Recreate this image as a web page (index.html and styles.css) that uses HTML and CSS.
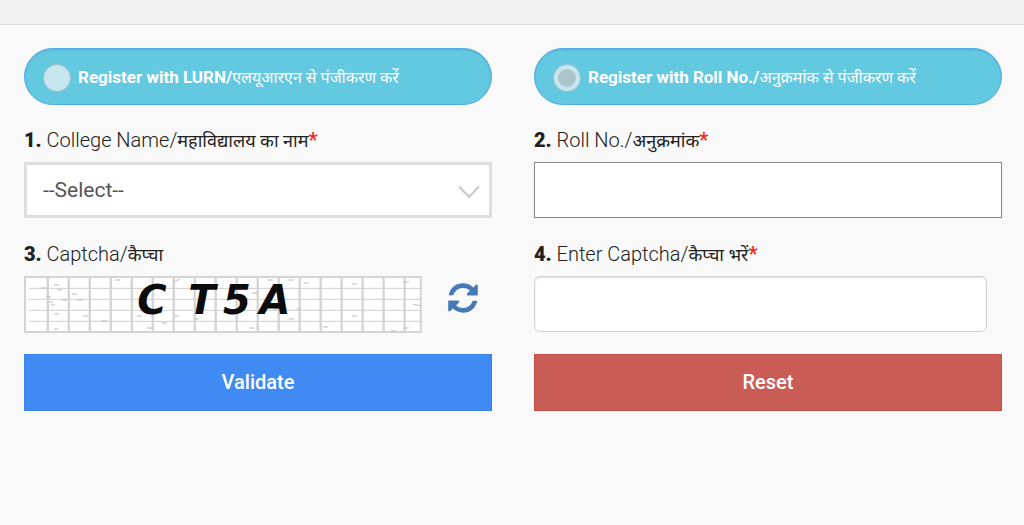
FILE: index.html
```html
<!DOCTYPE html>
<html lang="en">
<head>
    <meta charset="UTF-8">
    <meta name="viewport" content="width=device-width, initial-scale=1.0">
    <title>Student Registration</title>
    <link rel="stylesheet" href="styles.css">
</head>
<body>
    <header class="top-bar"></header>

    <form class="register-form">
        <label class="option">
            <input type="radio" name="registerBy" value="lurn">
            <span>Register with LURN/<span class="hindi">एलयूआरएन से पंजीकरण करें</span></span>
        </label>
        <label class="option">
            <input type="radio" name="registerBy" value="roll" checked>
            <span>Register with Roll No./<span class="hindi">अनुक्रमांक से पंजीकरण करें</span></span>
        </label>

        <div class="form-group">
            <label for="college"><b>1.</b> College Name/<span class="hindi">महाविद्यालय का नाम</span><span class="required">*</span></label>
            <div class="select-box">
                <select id="college">
                    <option value="">--Select--</option>
                </select>
                <svg class="arrow" width="22" height="14" viewBox="0 0 22 14">
                    <path d="M1 1.5 L11 12 L21 1.5" fill="none" stroke="#c8c8c8" stroke-width="2"/>
                </svg>
            </div>
        </div>

        <div class="form-group">
            <label for="rollNo"><b>2.</b> Roll No./<span class="hindi">अनुक्रमांक</span><span class="required">*</span></label>
            <input type="text" id="rollNo" class="roll-input">
        </div>

        <div class="form-group">
            <label for="refreshCaptcha"><b>3.</b> Captcha/<span class="hindi">कैप्चा</span></label>
            <div class="captcha-row">
                <svg class="captcha" viewBox="0 0 398 57" role="img" aria-label="Captcha">
                    <defs>
                        <pattern id="grid" x="4" y="2" width="21" height="11" patternUnits="userSpaceOnUse">
                            <path d="M0 10.5 H21" stroke="#d6d6d6" stroke-width="1.4"/>
                            <path d="M19.8 0 V11" stroke="#d4d4d4" stroke-width="2.4"/>
                        </pattern>
                    </defs>
                    <rect width="398" height="57" fill="#fff"/>
                    <rect x="5" width="393" height="57" fill="url(#grid)"/>
                    <rect x="1" y="1" width="396" height="55" fill="none" stroke="#d4d4d4" stroke-width="2"/>
                    <path d="M17 12h5 M30 9h5 M33 14h5 M22 21h5 M25 26h4 M27 29h4 M38 24h5 M48 18h5 M53 24h6 M30 38h5 M59 40h5 M30 53h4 M78 45h5 M91 4h5 M113 40h5 M123 52h5 M138 47h5 M150 6l6-3 M151 40h4 M171 43h4 M225 52h5 M228 17h5 M220 28h5 M243 4h6 M264 4h6 M280 7h5 M328 8h5 M380 6h5 M389 28l8 2 M328 40h5 M265 43h5 M250 33h4 M273 33h4 M299 51h5 M367 55h5 M380 52h5" fill="none" stroke="#bbb" stroke-width="1"/>
                    <text class="captcha-text" x="128 178 213 251" y="38">CT5A</text>
                </svg>
                <button type="button" id="refreshCaptcha" class="refresh" aria-label="Refresh captcha">
                    <svg width="30" height="30" viewBox="0 0 30 30" fill="#467ab6">
                        <path d="M0.7 12.3 C2 5 7.8 0.3 15 0.3 C18.8 0.3 22.4 1.8 25.2 4.4 L27.8 1.9 C28.6 1.1 29.8 1.5 29.8 2.8 V11.4 C29.8 12 29.4 12.4 28.8 12.4 H20 C18.7 12.4 18.3 11.3 19.1 10.4 L21.9 7.5 C20 5.8 17.6 5 15 5 C11.4 5 8.2 6.9 6.4 9.8 C5.9 10.7 5.7 11.3 5.3 12.3 Z"/>
                        <path d="M29.3 17.7 C28 25 22.2 29.7 15 29.7 C11.2 29.7 7.6 28.2 4.8 25.6 L2.2 28.1 C1.4 28.9 0.2 28.5 0.2 27.2 V18.6 C0.2 18 0.6 17.6 1.2 17.6 H10 C11.3 17.6 11.7 18.7 10.9 19.6 L8.1 22.5 C10 24.2 12.4 25 15 25 C18.6 25 21.8 23.1 23.6 20.2 C24.1 19.3 24.3 18.7 24.7 17.7 Z"/>
                    </svg>
                </button>
            </div>
        </div>

        <div class="form-group">
            <label for="captchaInput"><b>4.</b> Enter Captcha/<span class="hindi">कैप्चा भरें</span><span class="required">*</span></label>
            <input type="text" id="captchaInput" class="captcha-input">
        </div>

        <button type="button" class="button validate">Validate</button>
        <button type="reset" class="button reset">Reset</button>
    </form>
</body>
</html>
```

FILE: styles.css
```css
* {
    box-sizing: border-box;
}

body {
    margin: 0;
    background-color: #f9f9f9;
    color: #212121;
    font-family: Roboto, "Noto Sans", "Noto Sans Devanagari", sans-serif;
    font-size: 20px;
}

.top-bar {
    height: 25px;
    background: #f3f3f3;
    border-bottom: 1px solid #dcdcdc;
}

.register-form {
    display: grid;
    grid-template-columns: 1fr 1fr;
    column-gap: 42px;
    row-gap: 21px;
    padding: 23px 22px 24px 24px;
}

.option {
    display: flex;
    align-items: center;
    gap: 7px;
    height: 57px;
    padding: 0 18px;
    background: #63c9e1;
    border: 1px solid #4fabe8;
    border-radius: 29px;
    box-shadow: inset 0 1px 2px rgba(40, 120, 190, 0.3);
    color: #fff;
    font-size: 17px;
    font-weight: 700;
    white-space: nowrap;
}

.option input {
    appearance: none;
    display: grid;
    place-items: center;
    flex: none;
    width: 28px;
    height: 28px;
    margin: 2px 0 0;
    background: #c6e7f0;
    border: 1px solid #a5bfc6;
    border-radius: 50%;
}

.option input:checked::before {
    content: "";
    width: 18px;
    height: 18px;
    background: #abc3ca;
    border-radius: 50%;
}

.option .hindi {
    font-size: 16px;
    font-weight: 400;
}

.form-group {
    min-height: 93px;
}

.form-group label {
    display: block;
    height: 28px;
    margin-bottom: 8px;
    line-height: 28px;
    font-weight: 300;
    white-space: nowrap;
}

.form-group b {
    font-weight: 900;
}

.form-group .hindi {
    font-size: 18px;
    font-weight: 400;
}

.required {
    color: #f32c1e;
    font-weight: 700;
}

.select-box {
    display: grid;
    align-items: center;
}

.select-box select,
.arrow {
    grid-area: 1 / 1;
}

.arrow {
    justify-self: end;
    margin: 4px 12px 0 0;
    pointer-events: none;
}

select,
.roll-input,
.captcha-input {
    display: block;
    width: 100%;
    height: 56px;
    padding: 0 16px;
    background: #fff;
    color: #555;
    font-family: inherit;
    font-size: 21px;
}

select {
    appearance: none;
    border: 3px solid #dedede;
    border-radius: 0;
}

.roll-input {
    border: 1px solid #858585;
}

.captcha-input {
    width: calc(100% - 15px);
    border: 1px solid #d2d2d2;
    border-radius: 6px;
    box-shadow: inset 0 1px 2px rgba(0, 0, 0, 0.12);
}

.captcha-row {
    display: flex;
    align-items: center;
}

.captcha {
    width: 85%;
    height: auto;
}

.captcha-text {
    fill: #0c0c0c;
    font-family: "DejaVu Sans", sans-serif;
    font-size: 40px;
    font-style: italic;
    font-weight: 700;
    text-anchor: middle;
}

.refresh {
    display: flex;
    margin: 0 0 12px 26px;
    padding: 0;
    border: none;
    background: none;
    cursor: pointer;
}

.button {
    height: 57px;
    padding-bottom: 3px;
    border: 1px solid;
    color: #fff;
    font-family: inherit;
    font-size: 20px;
    font-weight: 500;
    cursor: pointer;
}

.validate {
    background: #3f8af3;
    border-color: #3a83ea;
}

.reset {
    background: #c95c54;
    border-color: #c34f48;
}
```
